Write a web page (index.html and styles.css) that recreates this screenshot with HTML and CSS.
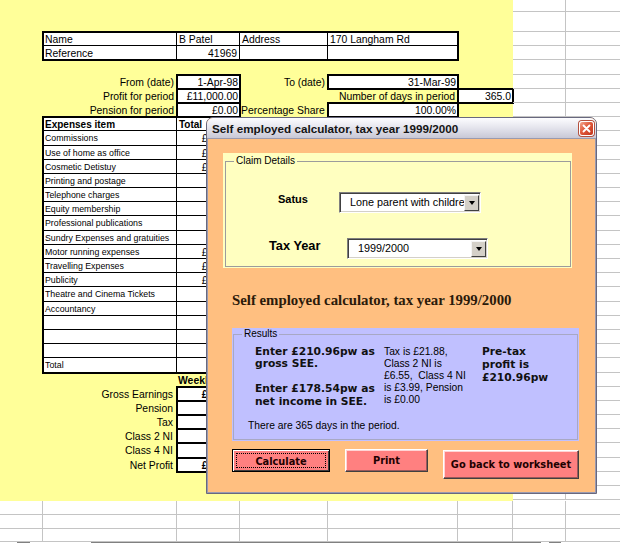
FILE: index.html
```html
<!DOCTYPE html>
<html>
<head>
<meta charset="utf-8">
<title>Self employed calculator</title>
<link rel="stylesheet" href="styles.css">
</head>
<body>
<div class="screen">
  <div class="upper">
    <div class="yellow">
      <div class="toprows"></div>
      <div class="nametable">
        <div class="nc">Name</div><div class="nc">B Patel</div><div class="nc">Address</div><div class="nc">170 Langham Rd</div>
        <div class="nc last">Reference</div><div class="nc last r">41969</div><div class="nc last"></div><div class="nc last"></div>
      </div>
      <div class="blank"></div>
      <div class="info">
        <div></div><div class="lab">From (date)</div><div class="bx">1-Apr-98</div><div class="lab">To (date)</div><div class="bx">31-Mar-99</div><div></div>
        <div></div><div class="lab">Profit for period</div><div class="bx">£11,000.00</div><div></div><div class="lab">Number of days in period</div><div class="bx">365.0</div>
        <div></div><div class="lab">Pension for period</div><div class="bx">£0.00</div><div class="txt">Percentage Share</div><div class="bx">100.00%</div><div></div>
      </div>
      <div class="expenses">
        <div class="h">Expenses item</div><div class="h">Total</div>
        <div>Commissions</div><div class="ev">£400.00</div>
        <div>Use of home as office</div><div class="ev">£260.00</div>
        <div>Cosmetic Detistuy</div><div class="ev">£350.00</div>
        <div>Printing and postage</div><div class="ev"></div>
        <div>Telephone charges</div><div class="ev"></div>
        <div>Equity membership</div><div class="ev"></div>
        <div>Professional publications</div><div class="ev"></div>
        <div>Sundry Expenses and gratuities</div><div class="ev"></div>
        <div>Motor running expenses</div><div class="ev">£850.00</div>
        <div>Travelling Expenses</div><div class="ev">£420.00</div>
        <div>Publicity</div><div class="ev">£150.00</div>
        <div>Theatre and Cinema Tickets</div><div class="ev"></div>
        <div>Accountancy</div><div class="ev"></div>
        <div></div><div class="ev"></div>
        <div></div><div class="ev"></div>
        <div></div><div class="ev"></div>
        <div>Total</div><div class="ev"></div>
      </div>
      <div class="weekly">
        <div></div><div></div><div class="wh">Weekly</div>
        <div></div><div class="lab">Gross Earnings</div><div class="bx b">£210.96</div>
        <div></div><div class="lab">Pension</div><div class="bx">£0.00</div>
        <div></div><div class="lab">Tax</div><div class="bx">£21.88</div>
        <div></div><div class="lab">Class 2 NI</div><div class="bx">£6.55</div>
        <div></div><div class="lab">Class 4 NI</div><div class="bx">£3.99</div>
        <div></div><div class="lab">Net Profit</div><div class="bx b">£178.54</div>
      </div>
    </div>
    <div class="rgrid">
      <i></i><i></i><i></i><i></i><i></i><i></i><i></i><i></i><i></i><i></i>
      <i></i><i></i><i></i><i></i><i></i><i></i><i></i><i></i><i></i><i></i>
      <i></i><i></i><i></i><i></i><i></i><i></i><i></i><i></i><i></i><i></i>
      <i></i><i></i><i></i><i></i><i></i><i></i><i></i><i></i><i></i><i></i>
      <i></i><i></i><i></i><i></i><i></i><i></i><i></i><i></i><i></i><i></i>
      <i></i><i></i><i></i><i></i><i></i><i></i><i></i><i></i><i></i><i></i>
      <i></i><i></i><i></i><i></i><i></i><i></i><i></i><i></i><i></i><i></i>
    </div>
  </div>
  <div class="lower">
    <i></i><i></i><i></i><i></i><i></i><i></i><i></i><i></i>
    <i></i><i></i><i></i><i></i><i></i><i></i><i></i><i></i>
    <i></i><i></i><i></i><i></i><i></i><i></i><i></i><i></i>
  </div>
  <div class="tabbar"><span class="t1"></span><span class="t2"></span><span class="t3"></span></div>

  <div class="dialog">
    <div class="titlebar">
      <span class="title">Self employed calculator, tax year 1999/2000</span>
      <span class="close"><svg width="13" height="13" viewBox="0 0 13 13"><path d="M3.5 3.5l6 6M9.5 3.5l-6 6" stroke="#fff" stroke-width="1.9" stroke-linecap="round"/></svg></span>
    </div>
    <div class="client">
      <div class="claim">
        <fieldset class="fs">
          <legend>Claim Details</legend>
          <div class="crow c1">
            <span class="clabel satus">Satus</span>
            <span class="combo w1"><span class="ctext">Lone parent with children</span><span class="dd"><i></i></span></span>
          </div>
          <div class="crow c2">
            <span class="clabel taxyear">Tax Year</span>
            <span class="combo w2"><span class="ctext">1999/2000</span><span class="dd"><i></i></span></span>
          </div>
        </fieldset>
      </div>
      <div class="heading">Self employed calculator, tax year 1999/2000</div>
      <div class="results">
        <fieldset class="fs rfs">
          <legend>Results</legend>
          <div class="rcols">
            <div class="col1">
              <p>Enter £210.96pw as<br>gross SEE.</p>
              <p>Enter £178.54pw as<br>net income in SEE.</p>
            </div>
            <div class="col2">Tax is £21.88,<br>Class 2 NI is<br>£6.55,&nbsp; Class 4 NI<br>is £3.99, Pension<br>is £0.00</div>
            <div class="col3">Pre-tax<br>profit is<br>£210.96pw</div>
          </div>
          <div class="days">There are 365 days in the period.</div>
        </fieldset>
      </div>
      <div class="btns">
        <button class="btn calc"><span class="focus">Calculate</span></button>
        <button class="btn print">Print</button>
        <button class="btn back">Go back to worksheet</button>
      </div>
    </div>
  </div>
</div>
</body>
</html>
```

FILE: styles.css
```css
* { box-sizing: border-box; }
html, body { margin: 0; padding: 0; }
body {
  width: 620px; height: 543px; overflow: hidden; background: #fff;
  font-family: "Liberation Sans", Arial, sans-serif; font-size: 10.4px; color: #000;
}
.screen { position: relative; width: 620px; height: 543px; overflow: hidden; }

/* ---------- spreadsheet ---------- */
.upper { display: flex; }
.yellow {
  width: 513px; height: 500.6px; flex: none; background: #ffff99;
  display: flex; flex-direction: column;
}
.toprows { height: 32px; flex: none; }
.blank { height: 14.2px; flex: none; }

.nametable {
  flex: none; margin-left: 43px; width: 415px; background: #fff;
  display: grid; grid-template-columns: 134px 63px 88px 130px; grid-template-rows: 14.2px 14.2px;
  outline: 2px solid #000; outline-offset: -1px;
}
.nc {
  border-right: 1px solid #000; border-bottom: 1px solid #000;
  padding: 1px 2px 0; line-height: 13px; white-space: nowrap; overflow: hidden;
}
.nc:nth-child(4n) { border-right: 0; }
.nc.last { border-bottom: 0; }
.r { text-align: right; }

.info {
  flex: none; display: grid;
  grid-template-columns: 43px 134px 63px 88px 130px 55px; grid-template-rows: repeat(3, 14.2px);
}
.info > div, .weekly > div { line-height: 14px; white-space: nowrap; padding-top: 1px; }
.lab { text-align: right; padding-right: 3px; }
.txt { padding-left: 1px; }
.bx {
  background: #fff; outline: 2px solid #000; outline-offset: -1px;
  text-align: right; padding-right: 2px; overflow: hidden;
}
.bx.b { font-weight: bold; font-size: 10px; }

.expenses {
  flex: none; margin-left: 43px; width: 197px; background: #fff;
  display: grid; grid-template-columns: 134px 63px; grid-auto-rows: 14.2px;
  outline: 2px solid #000; outline-offset: -1px; font-size: 8.8px;
}
.expenses > div {
  border-bottom: 1px solid #000; line-height: 13px; padding: 1px 2px 0;
  white-space: nowrap; overflow: hidden;
}
.expenses > div:nth-child(odd) { border-right: 1px solid #000; }
.expenses > div:nth-last-child(-n+2) { border-bottom: 0; }
.expenses .h { font-weight: bold; font-size: 10px; }
.expenses .ev { text-align: right; font-size: 10px; }

.weekly {
  flex: none; display: grid;
  grid-template-columns: 43px 134px 63px; grid-auto-rows: 14.2px;
}
.weekly .lab { padding-right: 4px; }
.wh { font-weight: bold; padding-left: 1px; }

.rgrid {
  flex: 1; display: grid; grid-template-columns: 53px 54px;
  grid-template-rows: 12px 20px repeat(33, 14.2px);
}
.rgrid i, .lower i { border-right: 1px solid #c4c4c4; border-bottom: 1px solid #c4c4c4; }
.rgrid i:nth-child(2n) { border-right: 0; }

.lower {
  display: grid;
  grid-template-columns: 43px 134px 63px 88px 130px 55px 53px 54px;
  grid-template-rows: 14.2px 14.2px 13px;
}
.lower i:nth-child(8n) { border-right: 0; }
.tabbar { display: flex; height: 3px; }
.tabbar span { border-top: 1px solid #808080; height: 3px; }
.t1 { width: 13px; margin-left: 17px; border-left: 1px solid #808080; border-right: 1px solid #808080; }
.t2 { width: 450px; margin-left: 61px; border-left: 1px solid #808080; }
.t3 { width: 12px; margin-left: 8px; border-left: 1px solid #808080; }

/* ---------- dialog ---------- */
.dialog {
  position: absolute; left: 206px; top: 117px; width: 391px; height: 377px;
  border: 1px solid #68687e; border-radius: 7px 7px 0 0; overflow: hidden;
  background: #ffbf80; display: flex; flex-direction: column;
}
.titlebar {
  flex: none; height: 21px; display: flex; align-items: center; justify-content: space-between;
  padding: 0 2px 0 5px; border-bottom: 1px solid #9a9aae;
  background: linear-gradient(#fdfdff 0%, #eeeef4 30%, #dedee8 60%, #c8c8d6 100%);
}
.title { font: bold 11.7px "Liberation Sans", Arial, sans-serif; color: #141414; white-space: nowrap; }
.close {
  width: 15px; height: 15px; border-radius: 3px; display: flex; align-items: center; justify-content: center;
  background: linear-gradient(135deg, #f4a890 0%, #e0583a 45%, #c2351c 100%);
  border: 1px solid #fff; box-shadow: 0 0 0 1px #b4503e;
}
.close svg { display: block; }

.client {
  flex: 1; border: 1px solid #9a9ab0; border-top: 0;
  display: flex; flex-direction: column;
}

.fs { margin: 0; padding: 0; height: 100%; border: 1px solid #9c9c9c; min-width: 0; }
.fs legend { font-size: 10px; padding: 0 2px; margin-left: 8px; line-height: 14px; }

.claim {
  flex: none; margin: 14px 0 0 15px; width: 349px; height: 115px;
  background: #ffffc0; padding: 1px 1px 1px 2px;
}
.crow { display: flex; align-items: flex-start; height: 21px; }
.c1 { margin-top: 24px; }
.c2 { margin-top: 25px; }
.clabel { font-weight: bold; line-height: 15px; white-space: nowrap; flex: none; }
.satus { font-size: 11px; margin-left: 52px; width: 61px; }
.taxyear { font-size: 12.8px; margin-left: 43px; width: 78px; }
.combo {
  flex: none; height: 21px; background: #fff; display: flex; align-items: center;
  border: 1px solid; border-color: #7f7f7f #fff #fff #7f7f7f;
  box-shadow: inset 1px 1px 0 #404040, inset -1px -1px 0 #d4d0c8;
  padding: 0 1px 0 0;
}
.w1 { width: 142px; }
.w2 { width: 141px; }
.ctext { flex: 1; overflow: hidden; white-space: nowrap; padding-left: 10px; font-size: 10.8px; line-height: 15px; }
.dd {
  flex: none; width: 15px; height: 16px; background: #d4d0c8;
  border: 1px solid; border-color: #f4f4f4 #404040 #404040 #f4f4f4;
  display: flex; align-items: center; justify-content: center;
}
.dd i { display: block; width: 0; height: 0; border-left: 3.5px solid transparent; border-right: 3.5px solid transparent; border-top: 4px solid #000; }

.heading {
  flex: none; margin: 23px 0 0 24px; font: bold 14.8px "Liberation Serif", "Times New Roman", serif;
  line-height: 18px; color: #2b1a0a; white-space: nowrap;
}

.results {
  flex: none; margin: 19px 0 0 24px; width: 347px; height: 113px;
  background: #c0c0ff; padding: 0 1px 1px 1px;
}
.rfs { border-color: #a8a8c4; }
.rfs legend { line-height: 12px; }
.rcols { display: flex; margin-top: 6px; }
.col1 { margin-left: 21px; width: 129px; font: bold 10.7px "DejaVu Sans", sans-serif; line-height: 12.4px; color: #111; }
.col1 p { margin: 0 0 12.4px; }
.col1 p:last-child { margin: 0; }
.col2 { width: 98px; font-size: 10.3px; line-height: 12px; }
.col3 { font: bold 10.7px "DejaVu Sans", sans-serif; line-height: 12.8px; color: #111; }
.days { margin: 12px 0 0 14px; font-size: 10.3px; line-height: 12px; }

.btns { display: flex; align-items: flex-start; gap: 15px; margin: 8px 0 0 24px; }
.btn {
  margin: 0; padding: 0; background: #ff8080; color: #200000;
  font: bold 9.8px "DejaVu Sans", sans-serif;
  display: flex; align-items: center; justify-content: center;
  border: 1px solid; border-color: #fff #404040 #404040 #fff;
  box-shadow: inset -1px -1px 0 #9a5a5a, inset 1px 1px 0 #ffd4d4;
}
.calc { width: 98px; height: 23px; border: 1px solid #000; padding: 3px; box-shadow: inset 1px 1px 0 #fff, inset -1px -1px 0 #404040; }
.calc .focus { flex: 1; align-self: stretch; border: 1px dotted #000; display: flex; align-items: center; justify-content: center; padding-top: 1px; }
.print { width: 83px; height: 23px; }
.back { width: 136px; height: 29px; margin-top: 1px; }
```
